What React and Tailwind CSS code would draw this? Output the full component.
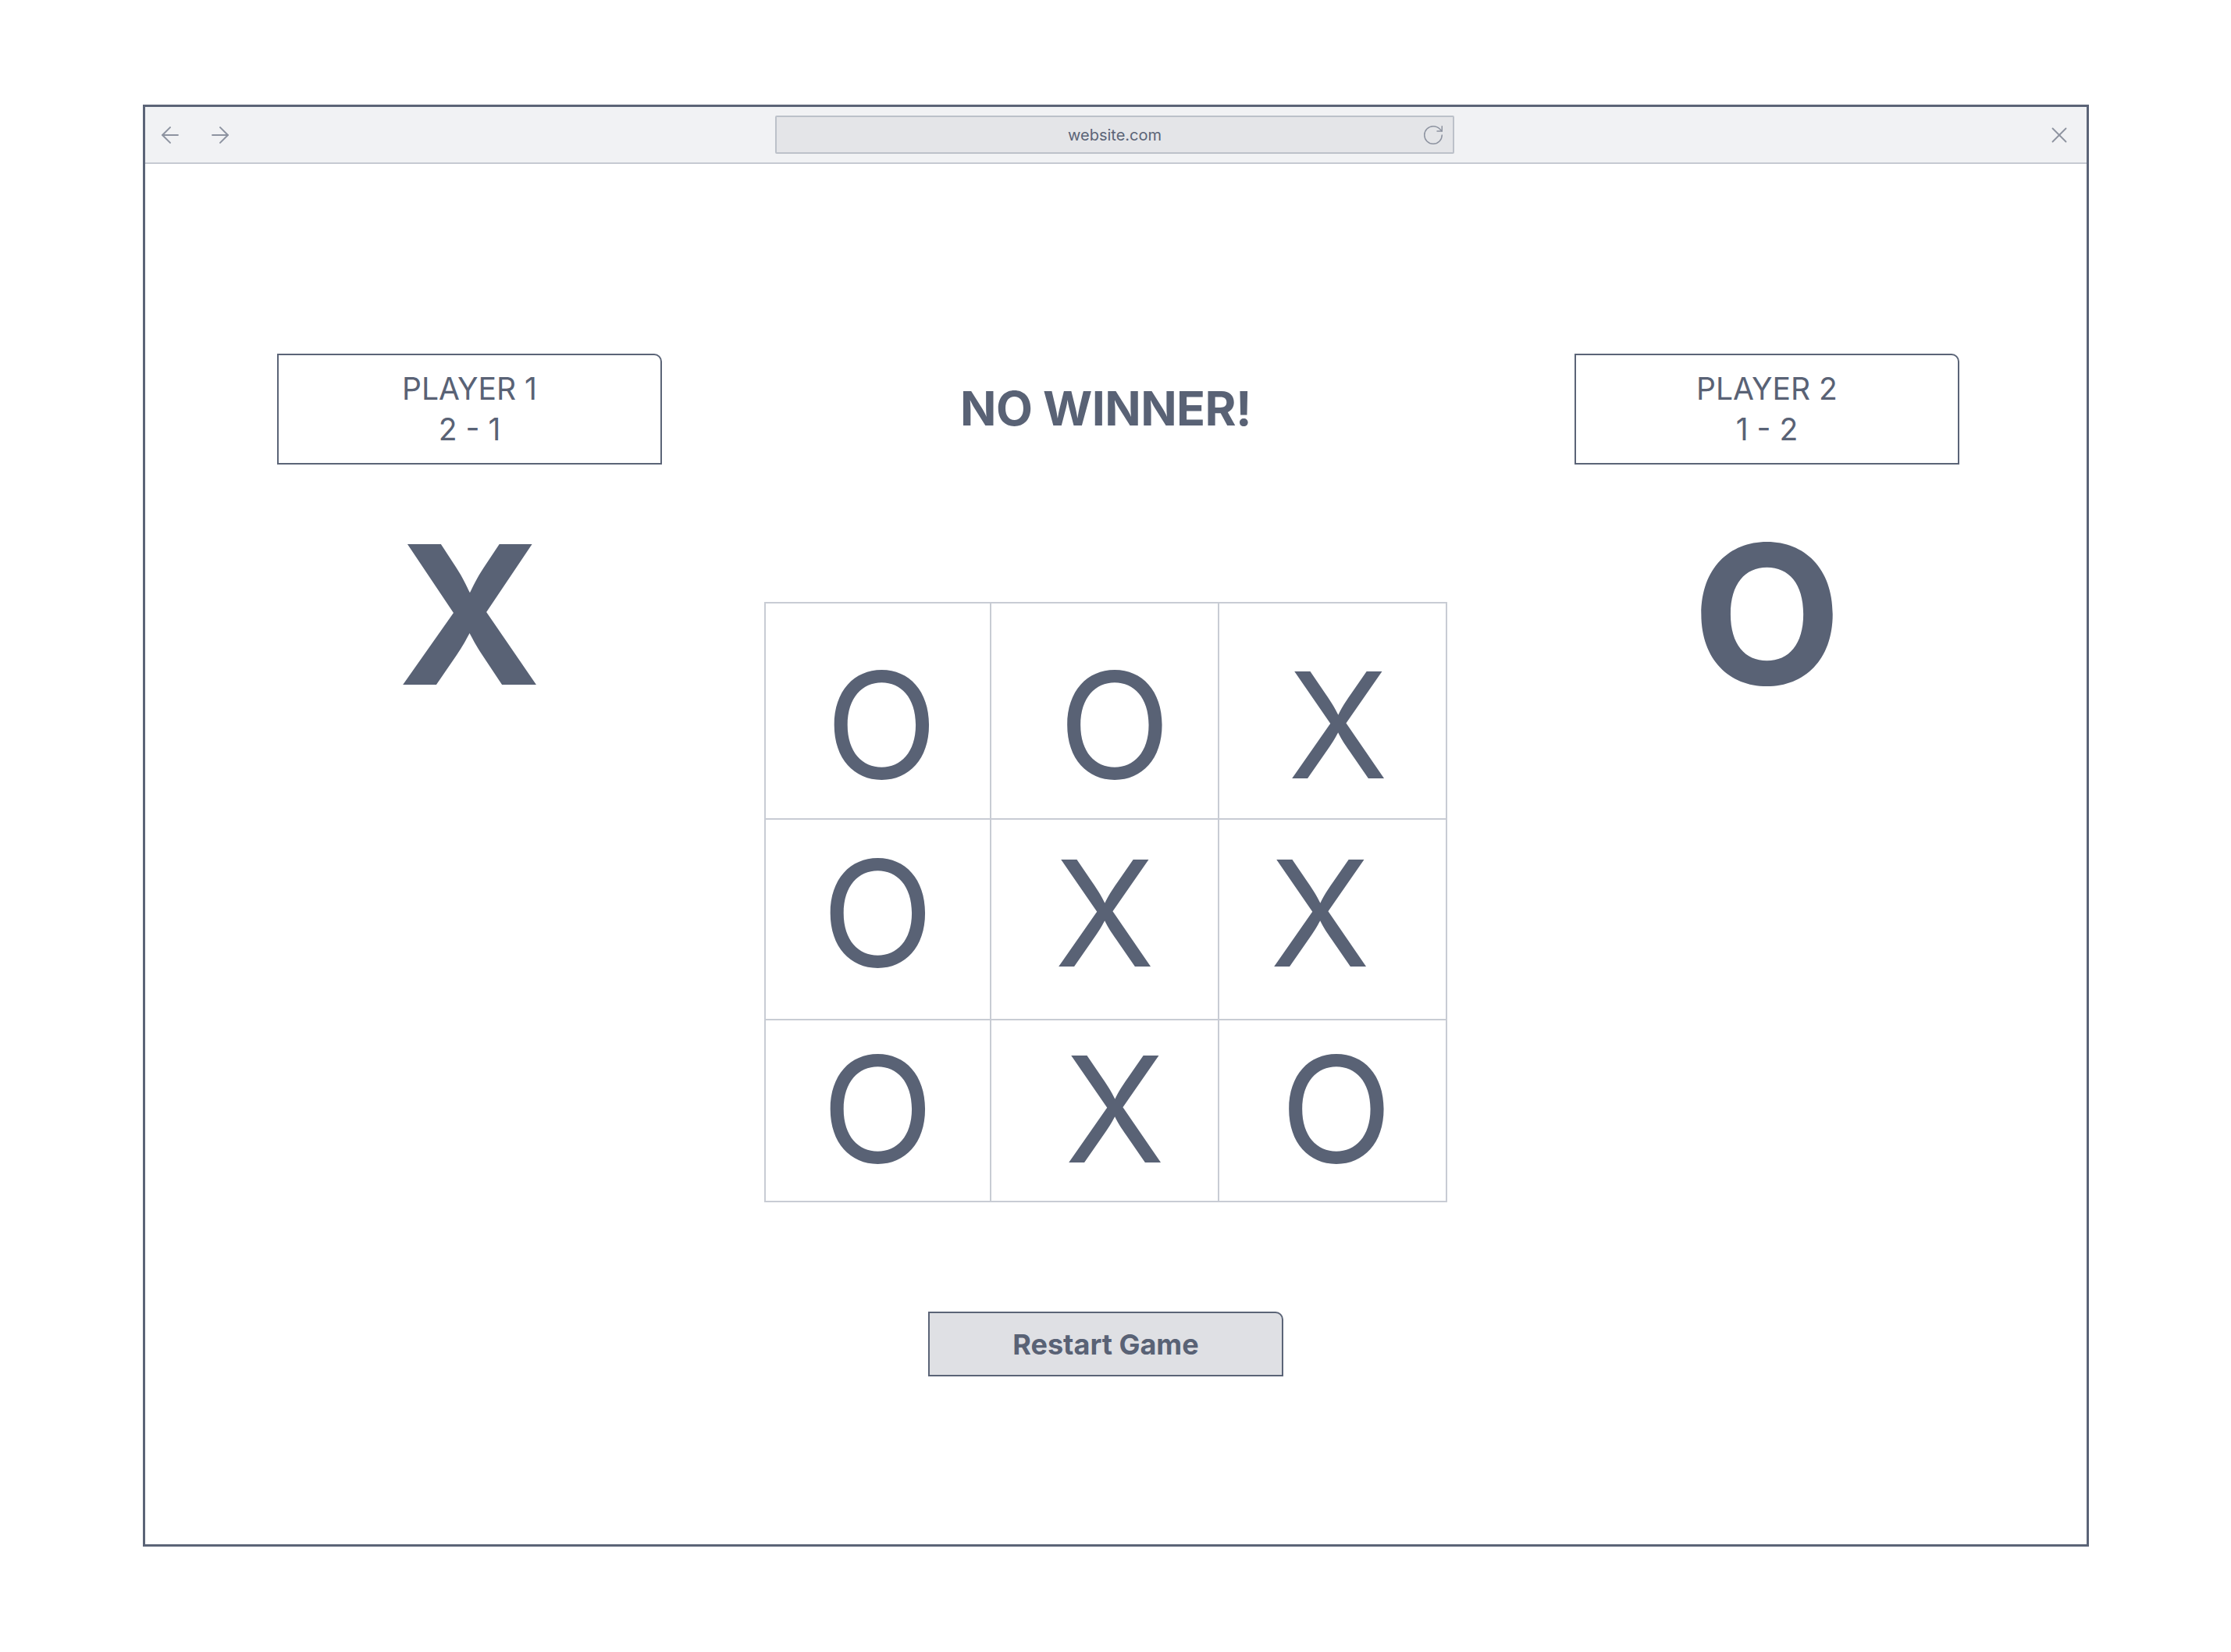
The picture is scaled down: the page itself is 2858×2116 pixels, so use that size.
import { ArrowLeft, ArrowRight, RotateCw, X } from "lucide-react";

// each cell carries a small nudge so the marks sit where the wireframe put them
const board = [
  [
    { mark: "O", nudge: "pl-[10px] pt-[36px]" },
    { mark: "O", nudge: "pl-[26px] pt-[36px]" },
    { mark: "X", nudge: "pl-[14px] pt-[36px]" },
  ],
  [
    { mark: "O", nudge: "pb-[15px]" },
    { mark: "X", nudge: "pb-[15px]" },
    { mark: "X", nudge: "pr-[32px] pb-[15px]" },
  ],
  [
    { mark: "O", nudge: "pb-[4px]" },
    { mark: "X", nudge: "pl-[26px] pb-[4px]" },
    { mark: "O", nudge: "pl-[10px] pb-[4px]" },
  ],
];

const rowHeights = ["h-[275px]", "h-[255px]", "h-[231px]"];
const colWidths = ["w-[289px]", "w-[292px]", "w-[290px]"];

function PlayerCard({ name, score, mark }) {
  return (
    <div className="flex w-[493px] flex-col items-center">
      <div className="flex h-[142px] w-full flex-col items-center justify-center rounded-tr-[10px] border-2 border-[#5b6477] text-[39px] leading-[52px] text-[#596275]">
        <span>{name}</span>
        <span>{score}</span>
      </div>
      <div className="mt-[68px] text-[248px] font-bold leading-none text-[#596275]">
        {mark}
      </div>
    </div>
  );
}

export default function App() {
  return (
    <div className="min-h-[2116px] bg-white pl-[183px] pt-[134px] font-['Inter','Liberation_Sans',sans-serif]">
      <div className="flex h-[1847px] w-[2493px] flex-col border-[3px] border-[#5b6477] bg-white">
        {/* browser chrome */}
        <div className="flex h-[73px] items-center border-b-2 border-[#c6cad2] bg-[#f1f2f4]">
          <div className="flex items-center gap-[30px] pl-[15px] text-[#8d93a0]">
            <ArrowLeft size={34} strokeWidth={1.4} />
            <ArrowRight size={34} strokeWidth={1.4} />
          </div>
          <div className="relative ml-[694px] flex h-[49px] w-[870px] items-center justify-center rounded-[2px] border-2 border-[#bcc1c9] bg-[#e4e5e8]">
            <span className="text-[20px] text-[#5b6477]">website.com</span>
            <RotateCw
              size={30}
              strokeWidth={1.2}
              className="absolute right-[10px] text-[#8d93a0]"
            />
          </div>
          <div className="ml-auto pr-[18px] text-[#8d93a0]">
            <X size={34} strokeWidth={1.3} />
          </div>
        </div>

        {/* game */}
        <div className="flex pt-[243px]">
          <div className="ml-[169px]">
            <PlayerCard name="PLAYER 1" score="2 - 1" mark="X" />
          </div>

          <div className="ml-[133px] flex w-[871px] flex-col items-center">
            <div className="flex h-[142px] items-center text-[61px] font-bold tracking-[-0.01em] text-[#596275]">
              NO WINNER!
            </div>
            <div className="mt-[176px] border-2 border-[#c8ccd4]">
              {board.map((row, r) => (
                <div key={r} className={`flex ${r < 2 ? "border-b-2 border-[#c8ccd4]" : ""}`}>
                  {row.map((cell, c) => (
                    <div
                      key={c}
                      className={`flex items-center justify-center text-[188px] leading-none text-[#596275] ${rowHeights[r]} ${colWidths[c]} ${cell.nudge} ${c < 2 ? "border-r-2 border-[#c8ccd4]" : ""}`}
                    >
                      {cell.mark}
                    </div>
                  ))}
                </div>
              ))}
            </div>
            <button className="mt-[140px] flex h-[83px] w-[455px] items-center justify-center rounded-tr-[10px] border-2 border-[#5b6477] bg-[#dfe0e4] text-[36px] font-bold text-[#596275]">
              Restart Game
            </button>
          </div>

          <div className="ml-[165px]">
            <PlayerCard name="PLAYER 2" score="1 - 2" mark="O" />
          </div>
        </div>
      </div>
    </div>
  );
}
